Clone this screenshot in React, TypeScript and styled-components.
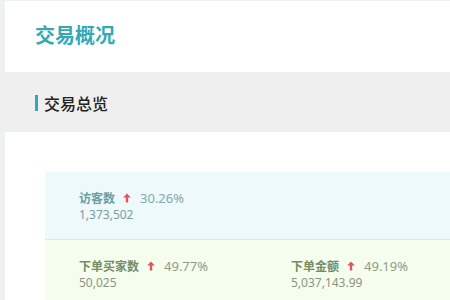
import React, { FunctionComponent } from 'react';
import styled, { createGlobalStyle } from 'styled-components';

const GlobalStyle = createGlobalStyle`
    html, body {
        margin: 0;
        padding: 0;
        background: #eef1f4;
        font-family: "Noto Sans CJK SC", "Noto Sans", sans-serif;
        overflow: hidden;
    }
`;

const Page = styled.div`
    padding: 1px 0 0 5px;
    width: 450px;
    height: 300px;
    box-sizing: border-box;
    overflow: hidden;
`;

const Header = styled.div`
    background: #fff;
    height: 71px;
    padding-left: 30px;
    display: flex;
    align-items: center;
`;

const Title = styled.h1`
    margin: 0;
    font-size: 20px;
    font-weight: 700;
    color: #33a9b5;
    line-height: 1;
    padding-bottom: 4px;
`;

const SectionBar = styled.div`
    background: #efefef;
    height: 60px;
    margin-left: -5px;
    padding-left: 35px;
    display: flex;
    align-items: center;
`;

const SectionTitle = styled.h2`
    margin: 0;
    font-size: 16px;
    font-weight: 500;
    color: #222;
    line-height: 16px;
    padding-left: 6px;
    border-left: 3px solid #33a9b5;
    margin-top: 2px;
`;

const Body = styled.div`
    background: #fff;
    height: 168px;
    box-sizing: border-box;
    padding: 40px 0 0 40px;
`;

const Card = styled.div`
    display: flex;
    flex-direction: column;
`;

interface RowProps {
    tone: 'cyan' | 'green';
}

const Row = styled.div<RowProps>`
    display: flex;
    height: 68px;
    padding: 17px 0 0 34px;
    box-sizing: border-box;
    background: ${(p) => (p.tone === 'cyan' ? '#edf9fa' : '#f5fdee')};
    border-bottom: ${(p) => (p.tone === 'cyan' ? '1px solid #dbe9ea' : 'none')};
`;

const Stat = styled.div`
    flex: 0 0 212px;
    display: flex;
    flex-direction: column;
`;

const LabelLine = styled.div`
    display: flex;
    align-items: center;
    height: 17px;
    font-size: 12px;
`;

const Label = styled.span<RowProps>`
    font-weight: 700;
    color: ${(p) => (p.tone === 'cyan' ? '#6c9ea4' : '#748c68')};
`;

const Arrow = styled.svg`
    margin: 0 9px 0 8px;
`;

const Percent = styled.span<RowProps>`
    font-family: "Noto Sans", sans-serif;
    font-size: 13px;
    color: ${(p) => (p.tone === 'cyan' ? '#82a9ad' : '#8f9b88')};
`;

const Value = styled.div<RowProps>`
    font-family: "Noto Sans", sans-serif;
    font-size: 12px;
    line-height: 17px;
    color: ${(p) => (p.tone === 'cyan' ? '#7a9ea3' : '#8a9584')};
`;

interface StatItemProps {
    tone: 'cyan' | 'green';
    label: string;
    percent: string;
    value: string;
}

const StatItem: FunctionComponent<StatItemProps> = ({ tone, label, percent, value }) => (
    <Stat>
        <LabelLine>
            <Label tone={tone}>{label}</Label>
            <Arrow width="8" height="10" viewBox="0 0 8 10">
                <path d="M4 0.5 L7.8 4.6 L5.2 4.6 L5.2 9.5 L2.8 9.5 L2.8 4.6 L0.2 4.6 Z" fill="#e2545e" />
            </Arrow>
            <Percent tone={tone}>{percent}</Percent>
        </LabelLine>
        <Value tone={tone}>{value}</Value>
    </Stat>
);

const App: FunctionComponent = () => (
    <Page>
        <GlobalStyle />
        <Header>
            <Title>交易概况</Title>
        </Header>
        <SectionBar>
            <SectionTitle>交易总览</SectionTitle>
        </SectionBar>
        <Body>
            <Card>
                <Row tone="cyan">
                    <StatItem tone="cyan" label="访客数" percent="30.26%" value="1,373,502" />
                </Row>
                <Row tone="green">
                    <StatItem tone="green" label="下单买家数" percent="49.77%" value="50,025" />
                    <StatItem tone="green" label="下单金额" percent="49.19%" value="5,037,143.99" />
                </Row>
            </Card>
        </Body>
    </Page>
);

export default App;
